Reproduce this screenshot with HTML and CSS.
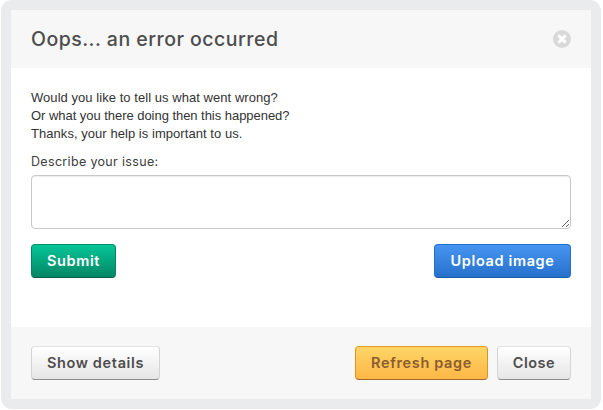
FILE: index.html
```html
<!DOCTYPE html>
<html lang="en">
<head>
<meta charset="utf-8">
<title>Error</title>
<link rel="stylesheet" href="styles.css">
</head>
<body>
<div class="dialog">
  <header class="head">
    <h1>Oops... an error occurred</h1>
    <svg class="close" viewBox="0 0 18 18" width="18" height="18"><circle cx="9" cy="9" r="9" fill="#d9d9d9"/><path d="M5.4 5.4l7.2 7.2M12.6 5.4l-7.2 7.2" stroke="#fff" stroke-width="3"/></svg>
  </header>
  <main class="body">
    <p class="intro"><span class="wide">Would you like to tell us what went wrong?</span><br><span class="tight">Or what you there doing then this happened?</span><br><span class="wide">Thanks, your help is important to us.</span></p>
    <label class="label" for="issue">Describe your issue:</label>
    <textarea id="issue"></textarea>
    <div class="row">
      <button class="btn green">Submit</button>
      <button class="btn blue">Upload image</button>
    </div>
  </main>
  <footer class="foot">
    <button class="btn light details">Show details</button>
    <button class="btn yellow">Refresh page</button>
    <button class="btn light shut">Close</button>
  </footer>
</div>
</body>
</html>
```
FILE: styles.css
```css
* { box-sizing: border-box; }
body { margin: 0; background: #fff; overflow: hidden; }
.dialog {
  width: 600px;
  height: 409px;
  margin-left: 1px;
  border: 10px solid #e9ebed;
  border-radius: 11px;
  background: #fff;
  display: flex;
  flex-direction: column;
  font-family: Inter, "Liberation Sans", sans-serif;
  color: #4d4d4d;
}
.head {
  height: 58px;
  padding: 0 20px;
  background: #f7f7f7;
  display: flex;
  align-items: center;
  justify-content: space-between;
}
h1 { margin: 0; font-size: 19.5px; line-height: 28px; font-weight: 500; letter-spacing: 0.48px; }
.body { flex: 1; padding: 21px 20px 0; }
.intro {
  margin: 0;
  font: 13px/18px "Liberation Sans", Arial, sans-serif;
  color: #333;
}
.wide { letter-spacing: 0.05px; }
.tight { letter-spacing: -0.04px; }
.label {
  display: block;
  margin: 10px 0 4px;
  font-size: 12.5px;
  line-height: 18px;
  color: #404040;
  letter-spacing: 0.33px;
}
textarea {
  display: block;
  width: 540px;
  height: 54px;
  border: 1px solid #c8c8c8;
  border-radius: 4px;
  background: #fff;
  box-shadow: inset 0 1px 1px rgba(0, 0, 0, 0.075);
  resize: both;
}
.row { display: flex; justify-content: space-between; margin-top: 15px; }
.btn {
  height: 34px;
  padding: 0;
  border: 1px solid;
  border-radius: 4px;
  font-family: inherit;
  font-size: 14.5px;
  line-height: 32px;
  font-weight: 600;
  letter-spacing: 0.65px;
  white-space: nowrap;
}
.green { width: 85px; color: #fff; background: linear-gradient(#04c597, #058665); border-color: #07916c #07835f #065f47; }
.blue { width: 137px; color: #fff; background: linear-gradient(#4794f2, #2671cb); border-color: #2370cc #2370cc #1d5ba6; }
.light { color: #4d4d4d; background: linear-gradient(#fff, #e6e6e6); border-color: #e1e1e1 #d4d4d4 #8c8c8c; }
.yellow { width: 133px; margin-left: auto; color: #8c5c2e; background: linear-gradient(#fdd667, #fdb747); border-color: #e39c24 #dd9424 #a0692a; }
.details { width: 129px; }
.shut { width: 74px; letter-spacing: 0.5px; }
.foot {
  height: 72px;
  padding: 19px 20px 0;
  background: #f7f7f7;
  display: flex;
  gap: 9px;
}
```
